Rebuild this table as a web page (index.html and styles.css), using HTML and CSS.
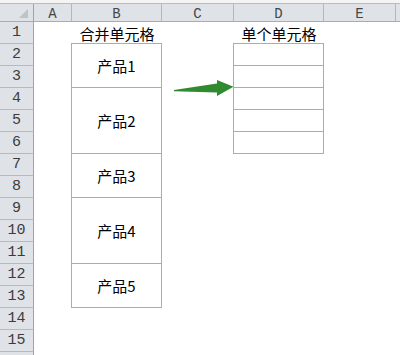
FILE: index.html
```html
<!DOCTYPE html>
<html lang="zh-CN">
<head>
<meta charset="utf-8">
<title>合并单元格</title>
<link rel="stylesheet" href="styles.css">
</head>
<body>
<div class="topbar"></div>
<div class="sheet">
  <div class="colhead corner"><span class="tri"></span></div>
  <div class="colhead">A</div>
  <div class="colhead">B</div>
  <div class="colhead">C</div>
  <div class="colhead">D</div>
  <div class="colhead">E</div>
  <div class="colhead last"></div>

  <div class="rowhead">1</div>
  <div class="rowhead">2</div>
  <div class="rowhead">3</div>
  <div class="rowhead">4</div>
  <div class="rowhead">5</div>
  <div class="rowhead">6</div>
  <div class="rowhead">7</div>
  <div class="rowhead">8</div>
  <div class="rowhead">9</div>
  <div class="rowhead">10</div>
  <div class="rowhead">11</div>
  <div class="rowhead">12</div>
  <div class="rowhead">13</div>
  <div class="rowhead">14</div>
  <div class="rowhead">15</div>
  <div class="rowhead"></div>

  <div class="cell colB row1">合并单元格</div>
  <div class="cell colD row1">单个单元格</div>

  <div class="cell box colB m2">产品1</div>
  <div class="cell box colB m4">产品2</div>
  <div class="cell box colB m7">产品3</div>
  <div class="cell box colB m9">产品4</div>
  <div class="cell box colB m12">产品5</div>

  <div class="cell box colD s2"></div>
  <div class="cell box colD s3"></div>
  <div class="cell box colD s4"></div>
  <div class="cell box colD s5"></div>
  <div class="cell box colD s6"></div>
</div>
<svg class="arrow" width="70" height="24" viewBox="170 76 70 24" xmlns="http://www.w3.org/2000/svg">
  <polygon points="174,90 217,83.5 217,80 233.5,86.8 217,96 217,92.5 174,91.2" fill="#2f8a30"/>
</svg>
</body>
</html>
```
FILE: styles.css
```css
html, body {
  margin: 0;
  padding: 0;
  background: #ffffff;
  overflow: hidden;
}

body {
  width: 400px;
  height: 355px;
  position: relative;
  font-family: "Noto Sans CJK SC", "Noto Sans", sans-serif;
}

.topbar {
  height: 3px;
  background: #f4f4f4;
  border-bottom: 1px solid #b9bcc1;
}

.sheet {
  display: grid;
  grid-template-columns: 34px 38px 90px 72px 90px 72px 1fr;
  grid-template-rows: 18px repeat(16, 22px);
}

.colhead {
  grid-row: 1;
  background: #dfe3e8;
  border-right: 1px solid #b3b7bd;
  border-bottom: 1px solid #a9adb3;
  display: flex;
  align-items: center;
  justify-content: center;
  font-family: "Liberation Mono", "DejaVu Sans Mono", monospace;
  font-size: 14px;
  color: #454545;
  padding-top: 2px;
  box-sizing: border-box;
}

.colhead.last {
  border-right: none;
}

.corner {
  position: relative;
  border-right-color: #a0a4aa;
}

.tri {
  position: absolute;
  right: 5px;
  bottom: 3px;
  width: 0;
  height: 0;
  border-left: 9px solid transparent;
  border-bottom: 9px solid #bfc3c8;
}

.rowhead {
  grid-column: 1;
  background: #dfe3e8;
  border-right: 1px solid #a0a4aa;
  border-bottom: 1px solid #b6babf;
  display: flex;
  align-items: flex-end;
  justify-content: center;
  padding-bottom: 1px;
  box-sizing: border-box;
  font-family: "Liberation Mono", "DejaVu Sans Mono", monospace;
  font-size: 15px;
  line-height: 18px;
  color: #3c3c3c;
}

.cell {
  display: flex;
  align-items: center;
  justify-content: center;
  font-size: 15px;
  color: #000000;
  line-height: 20px;
}

.colB { grid-column: 3; }
.colD { grid-column: 5; }

.row1 { grid-row: 2; padding-top: 2px; }

.box {
  margin: -1px 0 0 -1px;
  border: 1px solid #e8938b;
}

.m2 { grid-row: 3 / span 2; }
.m4 { grid-row: 5 / span 3; }
.m7 { grid-row: 8 / span 2; }
.m9 { grid-row: 10 / span 3; }
.m12 { grid-row: 13 / span 2; }

.s2 { grid-row: 3; }
.s3 { grid-row: 4; }
.s4 { grid-row: 5; }
.s5 { grid-row: 6; }
.s6 { grid-row: 7; }

.arrow {
  position: absolute;
  left: 170px;
  top: 76px;
}
```
